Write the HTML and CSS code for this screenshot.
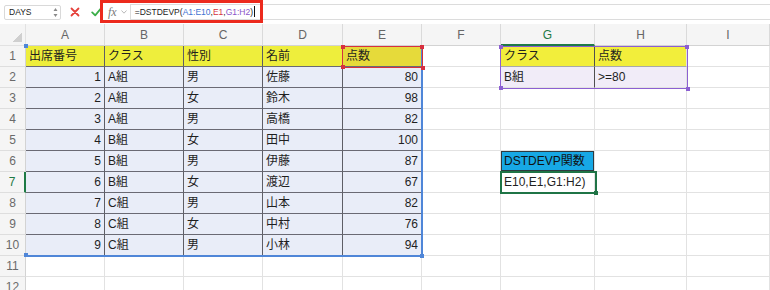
FILE: index.html
```html
<!DOCTYPE html>
<html lang="ja">

<head>
    <meta charset="UTF-8">
    <title>DSTDEVP</title>
    <link rel="stylesheet" href="styles.css">
</head>

<body>
    <!-- 数式バー -->
    <div class="toolbar">
        <div class="namebox">
            <span>DAYS</span>
            <svg class="spin" viewBox="0 0 5 11" width="5" height="11">
                <path d="M0.5 4 2.5 1 4.5 4Z M0.5 7 2.5 10 4.5 7Z" fill="#8a8a8a"></path>
            </svg>
        </div>
        <svg class="btn-cancel" viewBox="0 0 10 10" width="10" height="10">
            <path d="M1.5 1.5 8.5 8.5M8.5 1.5 1.5 8.5" stroke="#e5413b" stroke-width="1.8" stroke-linecap="round"></path>
        </svg>
        <svg class="btn-ok" viewBox="0 0 11 10" width="11" height="10">
            <path d="M1.2 5.4 4.2 8.3 9.8 1.6" fill="none" stroke="#3bae49" stroke-width="1.8" stroke-linecap="round" stroke-linejoin="round"></path>
        </svg>
        <span class="fx">fx</span>
        <svg class="chev" viewBox="0 0 6 4" width="6" height="4">
            <path d="M0.5 0.5 3 3.2 5.5 0.5" fill="none" stroke="#b0b0b0" stroke-width="0.9"></path>
        </svg>
        <div class="formula">=DSTDEVP(<span class="ref-a">A1:E10</span>,<span class="ref-e">E1</span>,<span class="ref-g">G1:H2</span>)<span class="caret"></span></div>
        <!-- 赤枠の注記 -->
        <div class="mark"></div>
    </div>

    <!-- シート -->
    <div class="sheet">
        <div class="grid">
            <div class="corner"></div>
            <div class="ch">A</div>
            <div class="ch">B</div>
            <div class="ch">C</div>
            <div class="ch">D</div>
            <div class="ch">E</div>
            <div class="ch">F</div>
            <div class="ch ch-active">G</div>
            <div class="ch">H</div>
            <div class="ch">I</div>

            <div class="rh">1</div>
            <div class="c th">出席番号</div>
            <div class="c th">クラス</div>
            <div class="c th">性別</div>
            <div class="c th">名前</div>
            <div class="c th th-score">点数</div>
            <div class="c"></div>
            <div class="c crit-h sep">クラス</div>
            <div class="c crit-h">点数</div>
            <div class="c"></div>

            <div class="rh">2</div>
            <div class="c tb num">1</div>
            <div class="c tb">A組</div>
            <div class="c tb">男</div>
            <div class="c tb">佐藤</div>
            <div class="c tb num">80</div>
            <div class="c"></div>
            <div class="c crit sep">B組</div>
            <div class="c crit">&gt;=80</div>
            <div class="c"></div>

            <div class="rh">3</div>
            <div class="c tb num">2</div>
            <div class="c tb">A組</div>
            <div class="c tb">女</div>
            <div class="c tb">鈴木</div>
            <div class="c tb num">98</div>
            <div class="c"></div>
            <div class="c"></div>
            <div class="c"></div>
            <div class="c"></div>

            <div class="rh">4</div>
            <div class="c tb num">3</div>
            <div class="c tb">A組</div>
            <div class="c tb">男</div>
            <div class="c tb">高橋</div>
            <div class="c tb num">82</div>
            <div class="c"></div>
            <div class="c"></div>
            <div class="c"></div>
            <div class="c"></div>

            <div class="rh">5</div>
            <div class="c tb num">4</div>
            <div class="c tb">B組</div>
            <div class="c tb">女</div>
            <div class="c tb">田中</div>
            <div class="c tb num">100</div>
            <div class="c"></div>
            <div class="c"></div>
            <div class="c"></div>
            <div class="c"></div>

            <div class="rh">6</div>
            <div class="c tb num">5</div>
            <div class="c tb">B組</div>
            <div class="c tb">男</div>
            <div class="c tb">伊藤</div>
            <div class="c tb num">87</div>
            <div class="c"></div>
            <div class="c fn">DSTDEVP関数</div>
            <div class="c"></div>
            <div class="c"></div>

            <div class="rh rh-active">7</div>
            <div class="c tb num">6</div>
            <div class="c tb">B組</div>
            <div class="c tb">女</div>
            <div class="c tb">渡辺</div>
            <div class="c tb num">67</div>
            <div class="c"></div>
            <div class="c edit">E10,E1,G1:H2)</div>
            <div class="c"></div>
            <div class="c"></div>

            <div class="rh">8</div>
            <div class="c tb num">7</div>
            <div class="c tb">C組</div>
            <div class="c tb">男</div>
            <div class="c tb">山本</div>
            <div class="c tb num">82</div>
            <div class="c"></div>
            <div class="c"></div>
            <div class="c"></div>
            <div class="c"></div>

            <div class="rh">9</div>
            <div class="c tb num">8</div>
            <div class="c tb">C組</div>
            <div class="c tb">女</div>
            <div class="c tb">中村</div>
            <div class="c tb num">76</div>
            <div class="c"></div>
            <div class="c"></div>
            <div class="c"></div>
            <div class="c"></div>

            <div class="rh">10</div>
            <div class="c tb num">9</div>
            <div class="c tb">C組</div>
            <div class="c tb">男</div>
            <div class="c tb">小林</div>
            <div class="c tb num">94</div>
            <div class="c"></div>
            <div class="c"></div>
            <div class="c"></div>
            <div class="c"></div>

            <div class="rh">11</div>
            <div class="c"></div>
            <div class="c"></div>
            <div class="c"></div>
            <div class="c"></div>
            <div class="c"></div>
            <div class="c"></div>
            <div class="c"></div>
            <div class="c"></div>
            <div class="c"></div>

            <div class="rh">12</div>
            <div class="c"></div>
            <div class="c"></div>
            <div class="c"></div>
            <div class="c"></div>
            <div class="c"></div>
            <div class="c"></div>
            <div class="c"></div>
            <div class="c"></div>
            <div class="c"></div>
        </div>

        <!-- 参照範囲の色枠 -->
        <div class="range range-a"><i class="h tl"></i><i class="h bl"></i><i class="h br"></i></div>
        <div class="range range-e"><i class="h tl"></i><i class="h tr"></i><i class="h bl"></i><i class="h br"></i></div>
        <div class="range range-g"><i class="h tl"></i><i class="h tr"></i><i class="h bl"></i><i class="h br"></i></div>
        <div class="range range-sel"><i class="h br"></i></div>
    </div>
</body>

</html>
```

FILE: styles.css
```css
/* 全体 */
body {
    margin: 0;
    width: 770px;
    height: 290px;
    overflow: hidden;
    background: #fff;
    font-family: 'Liberation Sans', 'Noto Sans CJK JP', sans-serif;
    color: #1f1f1f;
}

/* 数式バー */
.toolbar {
    position: relative;
    display: flex;
    align-items: center;
    height: 24px;
}

.namebox {
    display: flex;
    align-items: center;
    justify-content: space-between;
    box-sizing: border-box;
    width: 57px;
    height: 15px;
    margin-left: 4px;
    padding: 0 2px 0 4px;
    border: 1px solid #d9d9d9;
    border-radius: 2px;
    font-size: 8.5px;
    color: #222;
}

.btn-cancel {
    margin-left: 9px;
}

.btn-ok {
    margin-left: 11px;
}

.fx {
    margin-left: 6px;
    font-family: 'Liberation Serif', serif;
    font-style: italic;
    font-size: 12px;
    color: #7a7a7a;
}

.chev {
    margin-left: 4px;
}

.formula {
    flex: 1;
    box-sizing: border-box;
    height: 16px;
    margin-left: 3px;
    padding-left: 4px;
    border: 1px solid #dcdcdc;
    border-right: none;
    font-size: 8.5px;
    line-height: 14px;
    color: #222;
    white-space: nowrap;
}

.ref-a {
    color: #3e72d1;
}

.ref-e {
    color: #d6313d;
}

.ref-g {
    color: #8a55c9;
}

.caret {
    display: inline-block;
    width: 1px;
    height: 11px;
    margin-left: 1px;
    vertical-align: -2px;
    background: #111;
}

/* 赤枠 */
.mark {
    position: absolute;
    left: 100px;
    top: 0;
    width: 163px;
    height: 23px;
    box-sizing: border-box;
    border: 3px solid #ec2a1d;
}

/* シート */
.sheet {
    position: relative;
}

.grid {
    display: grid;
    grid-template-columns: 26px 79px 79px 79px 80px 79px 79px 94px 92px 83px;
    grid-template-rows: 22px;
    grid-auto-rows: 21px;
    font-size: 12px;
}

.grid > div {
    box-sizing: border-box;
    border-right: 1px solid #e2e2e2;
    border-bottom: 1px solid #e2e2e2;
    white-space: nowrap;
    overflow: hidden;
}

.corner {
    background: #f5f5f5 linear-gradient(135deg, transparent 50%, #cfcfcf 50%) no-repeat right 3px bottom 3px / 10px 10px;
}

.grid > .ch {
    background: #f5f5f5;
    border-right-color: #dadada;
    border-bottom-color: #d3d3d3;
    text-align: center;
    line-height: 22px;
    color: #666;
}

.grid > .ch-active {
    color: #1e7a45;
    border-bottom: 2px solid #1e7a45;
}

.grid > .rh {
    background: #f5f5f5;
    border-right-color: #d3d3d3;
    border-bottom-color: #dedede;
    text-align: center;
    line-height: 20px;
    color: #6a6a6a;
}

.grid > .rh-active {
    color: #1e7a45;
    border-right: 2px solid #1e7a45;
}

.c {
    padding: 0 3px;
    line-height: 20px;
}

.num {
    text-align: right;
}

/* 表 */
.grid > .th,
.grid > .tb {
    border-right-color: #5e5e66;
    border-bottom-color: #6a6a74;
}

.th {
    background: #eeee3c;
}

.th-score {
    background: #e6da3a;
}

.tb {
    background: #e9edf8;
}

/* 検索条件 */
.crit-h {
    background: #f2ee3b;
}

.grid > .crit-h {
    border-bottom-color: #a9a9a9;
}

.crit {
    background: #f1ecf8;
}

.grid > .sep {
    border-right-color: #4f4f4f;
}

.fn {
    background: #17a8e5;
    box-shadow: inset 0 0 0 1px #2e3a40;
    color: #111;
}

/* 参照範囲の色枠 */
.range {
    position: absolute;
    box-sizing: border-box;
}

.range-a {
    left: 26px;
    top: 22px;
    width: 397px;
    height: 211px;
    border-right: 2px solid #4f86d8;
    border-bottom: 2px solid #4f86d8;
    color: #4f86d8;
}

.range-e {
    left: 342px;
    top: 22px;
    width: 81px;
    height: 22px;
    border: 1px solid #d7303f;
    color: #d7303f;
}

.range-g {
    left: 500px;
    top: 22px;
    width: 188px;
    height: 43px;
    border: 1px solid #8c5fd2;
    color: #8c5fd2;
}

.range-sel {
    left: 500px;
    top: 147px;
    width: 97px;
    height: 23px;
    border: 2px solid #1f7446;
    color: #1f7446;
}

.h {
    position: absolute;
    width: 4px;
    height: 4px;
    background: currentColor;
}

.tl {
    left: -2px;
    top: -2px;
}

.tr {
    right: -2px;
    top: -2px;
}

.bl {
    left: -2px;
    bottom: -2px;
}

.br {
    right: -3px;
    bottom: -3px;
}
```
